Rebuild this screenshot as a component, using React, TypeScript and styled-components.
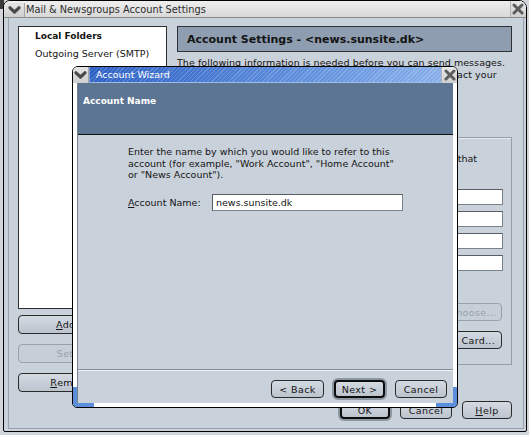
import React from "react";
import styled, { createGlobalStyle, css } from "styled-components";

const GlobalStyle = createGlobalStyle`
  html, body {
    margin: 0;
    padding: 0;
  }
  body {
    width: 529px;
    height: 435px;
    overflow: hidden;
    background: linear-gradient(#3a3a3a, #3a3a3a) 0 0 / 4px 9px no-repeat, #d2d6da;
    font-family: "DejaVu Sans", "Liberation Sans", sans-serif;
    font-size: 9.5px;
    color: #141414;
  }
`;

const Desktop = styled.div`
  position: relative;
  width: 529px;
  height: 435px;
`;

const Window = styled.div`
  position: absolute;
  left: 3px;
  top: 0;
  width: 524px;
  height: 432px;
  box-sizing: border-box;
  border: 1px solid #000;
  border-radius: 7px 8px 2px 2px;
  background: #c9d1da;
  display: flex;
  flex-direction: column;
  overflow: hidden;
`;

const TitleBar = styled.div`
  height: 16px;
  flex: none;
  display: flex;
  align-items: stretch;
  border-bottom: 1px solid #8c8c8c;
  background: linear-gradient(#eeeeee, #d8d8d8);
  padding-left: 1px;
`;

const MenuButton = styled.div<{ $small?: boolean }>`
  width: ${(p) => (p.$small ? 15 : 19)}px;
  margin-top: ${(p) => (p.$small ? 0 : 2)}px;
  display: flex;
  align-items: center;
  justify-content: center;
  background: linear-gradient(#e4e4e4, #cfcfcf);
  border-right: 1px solid #a4a4a4;
  border-radius: 4px 0 0 0;
  flex: none;
`;

const TitleText = styled.div<{ $light?: boolean }>`
  flex: 1;
  display: flex;
  align-items: center;
  padding-left: ${(p) => (p.$light ? 6 : 1)}px;
  font-size: ${(p) => (p.$light ? 9.5 : 9.8)}px;
  color: ${(p) => (p.$light ? "#fff" : "#2c2c2c")};
  white-space: nowrap;
  overflow: hidden;
`;

const CloseButton = styled.div<{ $small?: boolean }>`
  width: ${(p) => (p.$small ? 15 : 14)}px;
  display: flex;
  align-items: center;
  justify-content: center;
  flex: none;
  border-left: 1px solid #b4b4b4;
  background: linear-gradient(#e8e8e8, #d0d0d0);
  padding-right: ${(p) => (p.$small ? 0 : 1)}px;
`;

const Body = styled.div`
  flex: 1;
  display: flex;
  padding: 0 2px 2px 4px;
  min-height: 0;
`;

const Frame = styled.div`
  flex: 1;
  border: 1px solid #9aa3ad;
  border-top: none;
  padding: 8px 11px 9px 9px;
  display: grid;
  grid-template-columns: 149px 1fr;
  grid-template-rows: 1fr auto;
  column-gap: 10px;
  row-gap: 9px;
  min-height: 0;
`;

const LeftColumn = styled.div`
  display: flex;
  flex-direction: column;
  min-height: 0;
`;

const AccountList = styled.div`
  flex: 1;
  background: #fff;
  border: 1px solid #2e2e2e;
`;

const ListRow = styled.div<{ $bold?: boolean }>`
  height: 18px;
  line-height: 18px;
  padding-left: 16px;
  font-weight: ${(p) => (p.$bold ? "bold" : "normal")};
  font-size: ${(p) => (p.$bold ? "9px" : "9.5px")};
  white-space: nowrap;
`;

const buttonBase = css`
  box-sizing: border-box;
  height: 18px;
  border-radius: 4px;
  border: 1px solid #2a2a2a;
  background: linear-gradient(#d4dae2, #bcc4ce);
  font-family: "DejaVu Sans", "Liberation Sans", sans-serif;
  font-size: 9.5px;
  letter-spacing: 0.4px;
  color: #141414;
  padding: 0;
  display: flex;
  align-items: center;
  justify-content: center;
  white-space: nowrap;
  flex: none;
`;

const Button = styled.button<{ $w?: number; $default?: boolean }>`
  ${buttonBase};
  width: ${(p) => (p.$w ? `${p.$w}px` : "100%")};
  ${(p) =>
    p.$default &&
    css`
      border: 2px solid #0c0c0c;
      box-shadow: 0 0 0 2px #8d97a2;
    `}
  &:disabled {
    border-color: #98a2ad;
    color: #98a2ad;
    background: #c6ced7;
  }
`;

const LeftButton = styled(Button)<{ $gap?: number }>`
  margin-top: ${(p) => p.$gap ?? 6}px;
  height: 19px;
  letter-spacing: 0.3px;
`;

const RightColumn = styled.div`
  display: flex;
  flex-direction: column;
  min-width: 0;
`;

const PanelHeader = styled.div`
  height: 26px;
  box-sizing: border-box;
  border: 1px solid #2e3238;
  background: #8e9db0;
  display: flex;
  align-items: center;
  padding-left: 9px;
  font-size: 11px;
  font-weight: bold;
  white-space: nowrap;
`;

const Paragraph = styled.div<{ $mt?: number; $ls?: number; $pl?: number }>`
  margin-top: ${(p) => p.$mt ?? 0}px;
  padding-left: ${(p) => p.$pl ?? 0}px;
  letter-spacing: ${(p) => p.$ls ?? 0}px;
  line-height: 12px;
  white-space: nowrap;
`;

const FieldRow = styled.div<{ $mt?: number }>`
  display: flex;
  align-items: center;
  margin-top: ${(p) => p.$mt ?? 0}px;
  gap: 6px;
`;

const FieldLabel = styled.label<{ $w: number }>`
  width: ${(p) => p.$w}px;
  flex: none;
  white-space: nowrap;
`;

const TextInput = styled.div<{ $w?: number; $h?: number }>`
  box-sizing: border-box;
  height: ${(p) => p.$h ?? 16}px;
  ${(p) => (p.$w ? `width: ${p.$w}px; flex: none;` : "flex: 1;")}
  background: #fff;
  border: 1px solid #5a5e64;
  border-right-color: #7c828a;
  border-bottom-color: #7c828a;
  padding-left: 3px;
  display: flex;
  align-items: center;
  white-space: nowrap;
  overflow: hidden;
`;

const GroupBox = styled.div`
  margin-top: 28px;
  height: 228px;
  box-sizing: border-box;
  border: 1px solid #949ea9;
  box-shadow: inset 1px 1px 0 #e6ebf0;
  padding: 3px 8px 0 9px;
  display: flex;
  flex-direction: column;
`;

const Caption = styled.div`
  line-height: 12px;
  font-weight: bold;
  font-size: 9px;
`;

const Check = styled.span`
  width: 10px;
  height: 10px;
  box-sizing: border-box;
  border: 1px solid #5a5e64;
  background: #fff;
  flex: none;
`;

const Spacer = styled.span`
  flex: 1;
`;

const ButtonRow = styled.div`
  display: flex;
  justify-content: flex-end;
  gap: 10px;
`;

const SideButton = styled(Button)<{ $end?: boolean }>`
  margin-right: 1px;
  ${(p) =>
    p.$end &&
    css`
      justify-content: flex-end;
      padding-right: 6px;
      letter-spacing: 0.3px;
      word-spacing: 2px;
    `}
`;

const Key = styled.span`
  text-decoration: underline;
  text-underline-offset: 1px;
`;

/* ---------- Wizard dialog ---------- */

const Wizard = styled.div`
  position: absolute;
  left: 72px;
  top: 66px;
  width: 386px;
  height: 342px;
  box-sizing: border-box;
  border: 1px solid #000;
  border-radius: 6px 6px 5px 5px;
  background: #fff;
  display: flex;
  flex-direction: column;
  overflow: hidden;

  &::before,
  &::after {
    content: "";
    position: absolute;
    bottom: 0;
    width: 21px;
    height: 20px;
    box-sizing: border-box;
    border-bottom: 4px solid #5b8fdb;
  }
  &::before {
    left: 0;
    border-left: 4px solid #5b8fdb;
    border-bottom-left-radius: 4px;
  }
  &::after {
    right: 0;
    border-right: 4px solid #5b8fdb;
    border-bottom-right-radius: 4px;
  }
`;

const WizardTitleBar = styled.div`
  height: 16px;
  flex: none;
  display: flex;
  align-items: stretch;
  background: #d6d6d6;
`;

const BlueTitle = styled(TitleText)`
  background: repeating-linear-gradient(
      135deg,
      rgba(255, 255, 255, 0.18) 0 1px,
      rgba(255, 255, 255, 0) 1px 3px
    ),
    linear-gradient(to right, #2c60c4, #5a8bdb 55%, #88afea);
  border-left: 1px solid #7a9fdc;
  border-bottom: 1px solid #9fbbe8;
`;

const WizardContent = styled.div`
  flex: 1;
  margin: 0 4px 4px 4px;
  border-left: 1px solid #76818e;
  background: #c9d1da;
  display: flex;
  flex-direction: column;
  min-height: 0;
`;

const WizardHeader = styled.div`
  height: 52px;
  flex: none;
  box-sizing: border-box;
  border-bottom: 1px solid #111;
  background: #5b7592;
  color: #fff;
  font-weight: bold;
  font-size: 9px;
  padding: 13px 5px 0;
`;

const WizardBody = styled.div`
  flex: 1;
  padding: 11px 0 0 50px;
`;

const WizardText = styled(Paragraph)`
  line-height: 11.5px;
`;

const WizardRow = styled(FieldRow)`
  gap: 0;
`;

const WizardFooter = styled.div`
  height: 34px;
  flex: none;
  box-sizing: border-box;
  border-top: 1px solid #858e99;
  box-shadow: inset 0 1px 0 #eef2f6;
  padding: 10px 6px 0 0;
`;

const Chevron = () => (
  <svg width="13" height="8" viewBox="0 0 13 8">
    <path
      d="M2 1.8 L6.5 6 L11 1.8"
      fill="none"
      stroke="#4a4a4a"
      strokeWidth="3.2"
      strokeLinecap="round"
      strokeLinejoin="round"
    />
  </svg>
);

const CloseX = () => (
  <svg width="12" height="12" viewBox="0 0 12 12">
    <path
      d="M2 2 L10 10 M10 2 L2 10"
      fill="none"
      stroke="#5c5c5c"
      strokeWidth="3"
      strokeLinecap="round"
    />
  </svg>
);

export default function App() {
  return (
    <Desktop>
      <GlobalStyle />
      <Window>
        <TitleBar>
          <MenuButton>
            <Chevron />
          </MenuButton>
          <TitleText>Mail &amp; Newsgroups Account Settings</TitleText>
          <CloseButton>
            <CloseX />
          </CloseButton>
        </TitleBar>
        <Body>
          <Frame>
            <LeftColumn>
              <AccountList>
                <ListRow $bold>Local Folders</ListRow>
                <ListRow>Outgoing Server (SMTP)</ListRow>
              </AccountList>
              <LeftButton>
                <Key>A</Key>dd Account...
              </LeftButton>
              <LeftButton $gap={10} disabled>
                Set as Default
              </LeftButton>
              <LeftButton $gap={10}>
                <Key>R</Key>emove Account
              </LeftButton>
            </LeftColumn>

            <RightColumn>
              <PanelHeader>Account Settings - &lt;news.sunsite.dk&gt;</PanelHeader>
              <Paragraph $mt={5} $ls={0.06}>
                The following information is needed before you can send messages.
                <br />
                If you do not know the information requested, please contact your
              </Paragraph>
              <FieldRow $mt={12}>
                <FieldLabel $w={84}>
                  Account <Key>N</Key>ame:
                </FieldLabel>
                <TextInput $w={150}>news.sunsite.dk</TextInput>
              </FieldRow>
              <GroupBox>
                <Caption>Default Identity</Caption>
                <Paragraph $pl={9}>
                  Each account has an identity, which is the information that
                  <br />
                  other people see when they read your messages.
                </Paragraph>
                <FieldRow $mt={12}>
                  <FieldLabel $w={94}>Your Name:</FieldLabel>
                  <TextInput />
                </FieldRow>
                <FieldRow $mt={6}>
                  <FieldLabel $w={94}>Email Address:</FieldLabel>
                  <TextInput />
                </FieldRow>
                <FieldRow $mt={6}>
                  <FieldLabel $w={94}>Reply-to Address:</FieldLabel>
                  <TextInput />
                </FieldRow>
                <FieldRow $mt={6}>
                  <FieldLabel $w={94}>Organization:</FieldLabel>
                  <TextInput />
                </FieldRow>
                <FieldRow $mt={12}>
                  <Check />
                  <span>Attach this signature:</span>
                </FieldRow>
                <FieldRow $mt={9}>
                  <TextInput $h={17} />
                  <SideButton $w={58} disabled>
                    Choose...
                  </SideButton>
                </FieldRow>
                <FieldRow $mt={10}>
                  <Check />
                  <span>Attach my vCard to messages</span>
                  <Spacer />
                  <SideButton $w={72} $end>
                    Edit Card...
                  </SideButton>
                </FieldRow>
              </GroupBox>
            </RightColumn>

            <span />
            <ButtonRow>
              <Button $w={50} $default>
                OK
              </Button>
              <Button $w={52}>Cancel</Button>
              <Button $w={50}>
                <Key>H</Key>elp
              </Button>
            </ButtonRow>
          </Frame>
        </Body>
      </Window>

      <Wizard>
        <WizardTitleBar>
          <MenuButton $small>
            <Chevron />
          </MenuButton>
          <BlueTitle $light>Account Wizard</BlueTitle>
          <CloseButton $small>
            <CloseX />
          </CloseButton>
        </WizardTitleBar>
        <WizardContent>
          <WizardHeader>Account Name</WizardHeader>
          <WizardBody>
            <WizardText>
              Enter the name by which you would like to refer to this
              <br />
              account (for example, "Work Account", "Home Account"
              <br />
              or "News Account").
            </WizardText>
            <WizardRow $mt={13}>
              <FieldLabel $w={84}>
                <Key>A</Key>ccount Name:
              </FieldLabel>
              <TextInput $w={191} $h={17}>
                news.sunsite.dk
              </TextInput>
            </WizardRow>
          </WizardBody>
          <WizardFooter>
            <ButtonRow>
              <Button $w={53}>&lt; Back</Button>
              <Button $w={51} $default>
                Next &gt;
              </Button>
              <Button $w={52}>Cancel</Button>
            </ButtonRow>
          </WizardFooter>
        </WizardContent>
      </Wizard>
    </Desktop>
  );
}
